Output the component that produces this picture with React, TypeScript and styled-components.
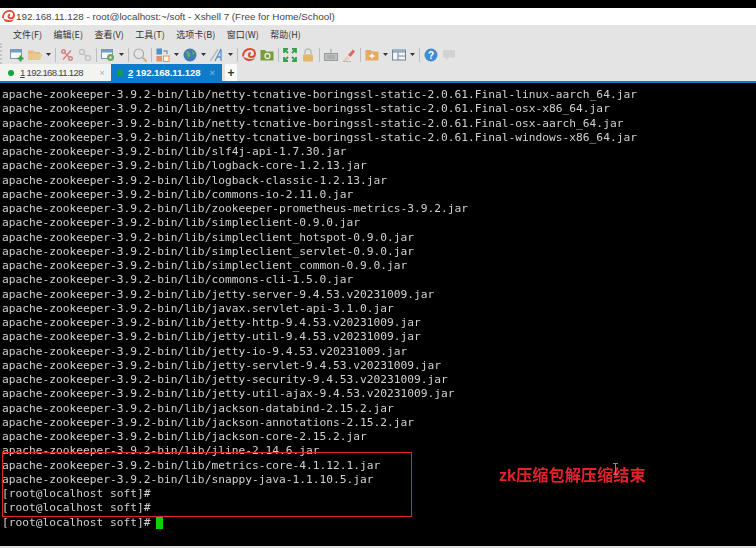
import { createGlobalStyle, styled } from "styled-components";

const GlobalStyle = createGlobalStyle`
  html, body {
    margin: 0;
    height: 100%;
    background: #000;
  }
`;

const lines = [
  "apache-zookeeper-3.9.2-bin/lib/netty-tcnative-boringssl-static-2.0.61.Final-linux-aarch_64.jar",
  "apache-zookeeper-3.9.2-bin/lib/netty-tcnative-boringssl-static-2.0.61.Final-osx-x86_64.jar",
  "apache-zookeeper-3.9.2-bin/lib/netty-tcnative-boringssl-static-2.0.61.Final-osx-aarch_64.jar",
  "apache-zookeeper-3.9.2-bin/lib/netty-tcnative-boringssl-static-2.0.61.Final-windows-x86_64.jar",
  "apache-zookeeper-3.9.2-bin/lib/slf4j-api-1.7.30.jar",
  "apache-zookeeper-3.9.2-bin/lib/logback-core-1.2.13.jar",
  "apache-zookeeper-3.9.2-bin/lib/logback-classic-1.2.13.jar",
  "apache-zookeeper-3.9.2-bin/lib/commons-io-2.11.0.jar",
  "apache-zookeeper-3.9.2-bin/lib/zookeeper-prometheus-metrics-3.9.2.jar",
  "apache-zookeeper-3.9.2-bin/lib/simpleclient-0.9.0.jar",
  "apache-zookeeper-3.9.2-bin/lib/simpleclient_hotspot-0.9.0.jar",
  "apache-zookeeper-3.9.2-bin/lib/simpleclient_servlet-0.9.0.jar",
  "apache-zookeeper-3.9.2-bin/lib/simpleclient_common-0.9.0.jar",
  "apache-zookeeper-3.9.2-bin/lib/commons-cli-1.5.0.jar",
  "apache-zookeeper-3.9.2-bin/lib/jetty-server-9.4.53.v20231009.jar",
  "apache-zookeeper-3.9.2-bin/lib/javax.servlet-api-3.1.0.jar",
  "apache-zookeeper-3.9.2-bin/lib/jetty-http-9.4.53.v20231009.jar",
  "apache-zookeeper-3.9.2-bin/lib/jetty-util-9.4.53.v20231009.jar",
  "apache-zookeeper-3.9.2-bin/lib/jetty-io-9.4.53.v20231009.jar",
  "apache-zookeeper-3.9.2-bin/lib/jetty-servlet-9.4.53.v20231009.jar",
  "apache-zookeeper-3.9.2-bin/lib/jetty-security-9.4.53.v20231009.jar",
  "apache-zookeeper-3.9.2-bin/lib/jetty-util-ajax-9.4.53.v20231009.jar",
  "apache-zookeeper-3.9.2-bin/lib/jackson-databind-2.15.2.jar",
  "apache-zookeeper-3.9.2-bin/lib/jackson-annotations-2.15.2.jar",
  "apache-zookeeper-3.9.2-bin/lib/jackson-core-2.15.2.jar",
  "apache-zookeeper-3.9.2-bin/lib/jline-2.14.6.jar",
  "apache-zookeeper-3.9.2-bin/lib/metrics-core-4.1.12.1.jar",
  "apache-zookeeper-3.9.2-bin/lib/snappy-java-1.1.10.5.jar",
  "[root@localhost soft]#",
  "[root@localhost soft]#",
];

const menus = ["文件(F)", "编辑(E)", "查看(V)", "工具(T)", "选项卡(B)", "窗口(W)", "帮助(H)"];

function Caret() {
  return (
    <CaretSvg width="5" height="3" viewBox="0 0 5 3">
      <path d="M0 0h5L2.5 3z" fill="#333" />
    </CaretSvg>
  );
}

// the red snail shell used as the Xshell logo
function ShellLogo({ size }: { size: number }) {
  return (
    <svg width={size} height={size} viewBox="0 0 14 14">
      <path d="M1 8.5C1 4 4 1 8 1c3 0 5 2 5 4.5 0 2-1.500 3.500-3.500 3.500-1.400 0-2.500-1-2.500-2.200 0-1 .7-1.800 1.700-1.800" fill="none" stroke="#df4a32" strokeWidth="2" />
      <path d="M1 8.500c1 3 3.500 4.500 6 4.500 2.500 0 5-.8 6-3-1.500.8-3 1.200-4.500 1C6 10.700 3 10 1 8.500z" fill="#df4a32" />
    </svg>
  );
}

function Toolbar() {
  return (
    <ToolRow>
      <svg width="14" height="14" viewBox="0 0 14 14">
        <rect x="0.500" y="1.500" width="11" height="9" fill="#f7f8f8" stroke="#7f97ae" />
        <rect x="1" y="2" width="10" height="2.500" fill="#6f9ecb" />
        <path d="M10.500 7.500v6M7.500 10.500h6" stroke="#2f9e41" strokeWidth="2" />
      </svg>
      <svg width="14" height="14" viewBox="0 0 14 14">
        <path d="M0 2.500h5l1.500 1.500H12v8H0z" fill="#dfbd84" />
        <path d="M0 5.500h14l-2 6.500H0z" fill="#e9c88f" />
      </svg>
      <Caret />
      <Sep />
      <svg width="14" height="14" viewBox="0 0 14 14" fill="none" stroke="#d77f80" strokeWidth="1.400">
        <circle cx="3.500" cy="3.500" r="1.800" />
        <circle cx="10.500" cy="10.500" r="1.800" />
        <path d="M5 5l4 4M11 2.500L3 11.500" />
      </svg>
      <svg width="14" height="14" viewBox="0 0 14 14" fill="none" stroke="#c2c4c2" strokeWidth="1.500">
        <circle cx="4" cy="4" r="2.500" />
        <circle cx="10" cy="10" r="2.500" />
        <path d="M6 6l2 2" />
      </svg>
      <Sep />
      <svg width="14" height="14" viewBox="0 0 14 14">
        <rect x="0.500" y="1.500" width="11" height="9" fill="#f7f8f8" stroke="#7f97ae" />
        <rect x="1" y="2" width="10" height="2.500" fill="#6f9ecb" />
        <circle cx="9.500" cy="9.500" r="3.500" fill="#6aa95f" />
        <circle cx="9.500" cy="9.500" r="1.200" fill="#e3e4e3" />
      </svg>
      <Caret />
      <Sep />
      <svg width="14" height="14" viewBox="0 0 14 14" fill="none">
        <circle cx="5.800" cy="5.800" r="4.800" stroke="#a5aaad" strokeWidth="1.200" />
        <path d="M9.500 9.500l4 4" stroke="#dcae72" strokeWidth="2" />
      </svg>
      <Sep />
      <svg width="14" height="14" viewBox="0 0 14 14">
        <rect x="0.500" y="0.500" width="5.500" height="6" fill="#4d8fc6" />
        <rect x="0.500" y="8" width="5.500" height="5.500" fill="#e88f63" />
        <rect x="7.500" y="8" width="5.500" height="5.500" fill="#f4f4f2" stroke="#e88f63" />
        <path d="M7.500 3h3.500v3" fill="none" stroke="#7f97ae" strokeWidth="1.300" />
      </svg>
      <Caret />
      <svg width="14" height="14" viewBox="0 0 14 14">
        <circle cx="7" cy="7" r="6.500" fill="#3f7cb2" />
        <path d="M3 3l3 .800 1.500 3.500-2.500 3zM9 2l3 3.500-2 2z" fill="#68a86c" />
      </svg>
      <Caret />
      <svg width="14" height="14" viewBox="0 0 14 14" fill="none">
        <path d="M0.500 13L8 1" stroke="#a9b2bb" strokeWidth="1.300" />
        <path d="M5 13L11 1v12M7.500 9H11" stroke="#5a8fca" strokeWidth="1.300" />
      </svg>
      <Caret />
      <Sep />
      <ShellLogo size={14} />
      <svg width="14" height="14" viewBox="0 0 14 14">
        <path d="M0.500 2h4.500l1 1.500h7.500v9H0.500z" fill="#7b9c3a" />
        <circle cx="7.500" cy="8" r="2.500" fill="none" stroke="#e8f0d8" strokeWidth="1.300" />
      </svg>
      <Sep />
      <svg width="14" height="14" viewBox="0 0 14 14" fill="none" stroke="#35a050" strokeWidth="1.800">
        <path d="M1 5V1h4M9 1h4v4M13 9v4H9M5 13H1V9M2 2l3 3M12 2L9 5M12 12L9 9M2 12l3-3" />
      </svg>
      <svg width="14" height="14" viewBox="0 0 14 14">
        <path d="M4 6.500V4a3 3 0 0 1 6 0v2.500" fill="none" stroke="#bdbdb9" strokeWidth="1.500" />
        <rect x="2" y="6.500" width="10" height="7" rx="1" fill="#e2b868" />
      </svg>
      <Sep />
      <svg width="14" height="14" viewBox="0 0 14 14">
        <rect x="0.500" y="5.500" width="13" height="7" fill="#bdc0c0" stroke="#999d9d" />
        <path d="M7 1v4.500M3 8h8M3 10h8" stroke="#999d9d" />
      </svg>
      <svg width="14" height="14" viewBox="0 0 14 14">
        <path d="M1 13l4-5 2.500 2.500L3 13z" fill="#e0cfa8" />
        <path d="M6 7l5-5.500 2 2-4.500 5.500z" fill="#d9695a" />
        <path d="M1 13.500h8" stroke="#dcb574" />
      </svg>
      <Sep />
      <svg width="14" height="14" viewBox="0 0 14 14">
        <path d="M0.500 2h5l1.500 1.500h6.500v9H0.500z" fill="#e6ab62" />
        <path d="M7 5.500v5M4.500 8h5" stroke="#fff" strokeWidth="1.300" />
      </svg>
      <Caret />
      <svg width="14" height="14" viewBox="0 0 14 14">
        <rect x="0.500" y="2" width="13" height="10" fill="#f4f5f5" stroke="#71859a" />
        <rect x="1" y="2.500" width="12" height="2.200" fill="#8aacd0" />
        <path d="M6 4.500v7.500M6 8h7.500" stroke="#71859a" />
      </svg>
      <Caret />
      <Sep />
      <svg width="14" height="14" viewBox="0 0 14 14">
        <circle cx="7" cy="7" r="6.500" fill="#3f8dd0" />
        <text x="7" y="10.500" textAnchor="middle" fontSize="10" fontWeight="700" fill="#fff" fontFamily="Liberation Sans, sans-serif">?</text>
      </svg>
      <svg width="14" height="14" viewBox="0 0 14 14">
        <path d="M1 2h12v7.500H6.500L4 12.500v-3H1z" fill="#d0d3d2" />
      </svg>
    </ToolRow>
  );
}

export default function App() {
  return (
    <>
      <GlobalStyle />
      <Screen>
        <TitleBar>
          <ShellLogo size={13} />
          <span>192.168.11.128 - root@localhost:~/soft - Xshell 7 (Free for Home/School)</span>
        </TitleBar>
        <MenuBar>
          {menus.map((m) => (
            <span key={m}>{m}</span>
          ))}
        </MenuBar>
        <Toolbar />
        <TabRow>
          <Tab>
            <Dot />
            <TabNum>1</TabNum> 192.168.11.128
            <TabClose>×</TabClose>
          </Tab>
          <Tab $active>
            <Dot />
            <TabNum $active>2</TabNum> 192.168.11.128
            <TabClose>×</TabClose>
          </Tab>
          <AddTab>+</AddTab>
        </TabRow>
        <Terminal>
          {lines.map((l, i) => (
            <Line key={i}>{l}</Line>
          ))}
          <Line>
            [root@localhost soft]# <Cursor />
          </Line>
          <Highlight />
          <Note>zk压缩包解压缩结束</Note>
          <MousePointer width="5" height="12" viewBox="0 0 5 12">
            <path d="M0 .5h5M2.500 .5v11M0 11.500h5" stroke="#8a8a8a" fill="none" />
          </MousePointer>
        </Terminal>
        <BottomEdge />
      </Screen>
    </>
  );
}

const Screen = styled.div`
  width: 756px;
  height: 548px;
  display: flex;
  flex-direction: column;
  padding-top: 8px;
  box-sizing: border-box;
  background: #000;
  overflow: hidden;
`;

const TitleBar = styled.div`
  height: 17px;
  display: flex;
  align-items: center;
  gap: 1px;
  padding-left: 2px;
  background: #fff;
  color: #444;
  font: 9.85px "Liberation Sans", "Noto Sans CJK SC", sans-serif;
  white-space: nowrap;
`;

const MenuBar = styled.div`
  height: 18px;
  display: flex;
  align-items: center;
  gap: 11.5px;
  padding-left: 13px;
  background: #e3e4e3;
  color: #333;
  font: 9px "Noto Sans CJK SC", sans-serif;
  white-space: nowrap;
`;

const ToolRow = styled.div`
  height: 21px;
  display: flex;
  align-items: center;
  gap: 4px;
  padding: 2px 0 0 8px;
  box-sizing: border-box;
  border-left: 2px dotted #c2c3c2;
  background: #e3e4e3;

  svg {
    flex: none;
  }
`;

const CaretSvg = styled.svg`
  flex: none;
`;

const Sep = styled.i`
  width: 1px;
  height: 14px;
  background: #bcbebd;
`;

const TabRow = styled.div`
  height: 19px;
  box-sizing: border-box;
  display: flex;
  align-items: stretch;
  background: #e3e4e3;
  border-bottom: 2px solid #0f7cc9;
`;

const Tab = styled.div<{ $active?: boolean }>`
  width: 111px;
  display: flex;
  align-items: center;
  padding-left: ${(p) => (p.$active ? "6px" : "8px")};
  box-sizing: border-box;
  background: ${(p) => (p.$active ? "#0f7cc9" : "#f3f3f1")};
  color: ${(p) => (p.$active ? "#fff" : "#444")};
  font: ${(p) => (p.$active ? "700" : "400")} 9.6px "Liberation Sans", sans-serif;
  letter-spacing: ${(p) => (p.$active ? "-0.1px" : "-0.7px")};
  white-space: pre;
`;

const Dot = styled.span`
  width: 6px;
  height: 6px;
  margin-right: 6px;
  border-radius: 50%;
  background: #12a53a;
`;

const TabNum = styled.span<{ $active?: boolean }>`
  margin-left: ${(p) => (p.$active ? "-1px" : "0")};
  text-decoration: underline;
`;

const TabClose = styled.span`
  margin-left: auto;
  margin-right: 7px;
  opacity: 0.4;
  font-size: 9px;
`;

const AddTab = styled.div`
  width: 12px;
  margin-left: 3px;
  display: flex;
  align-items: center;
  justify-content: center;
  background: #fafafa;
  color: #333;
  font: 700 12px "Liberation Sans", sans-serif;
`;

const Terminal = styled.div`
  position: relative;
  flex: 1;
  padding: 5px 0 0 2px;
  background: #000;
  color: #d0d0d0;
  font: 11.22px/14.25px "DejaVu Sans Mono", monospace;
  filter: blur(0.25px);
`;

const Line = styled.div`
  height: 14.25px;
  white-space: pre;
`;

const Cursor = styled.span`
  display: inline-block;
  width: 7px;
  height: 13px;
  margin-left: -1px;
  vertical-align: -3px;
  background: #0ad30a;
`;

const Highlight = styled.div`
  position: absolute;
  left: 2px;
  top: 369px;
  width: 408px;
  height: 63px;
  border: 1px solid #e0222a;
`;

const Note = styled.div`
  position: absolute;
  left: 499px;
  top: 379px;
  color: #e3222b;
  font: 700 16.2px "Liberation Sans", "Noto Sans CJK SC", sans-serif;
  white-space: nowrap;
`;

const MousePointer = styled.svg`
  position: absolute;
  left: 613px;
  top: 380px;
`;

const BottomEdge = styled.div`
  height: 2px;
  background: #dedede;
`;
